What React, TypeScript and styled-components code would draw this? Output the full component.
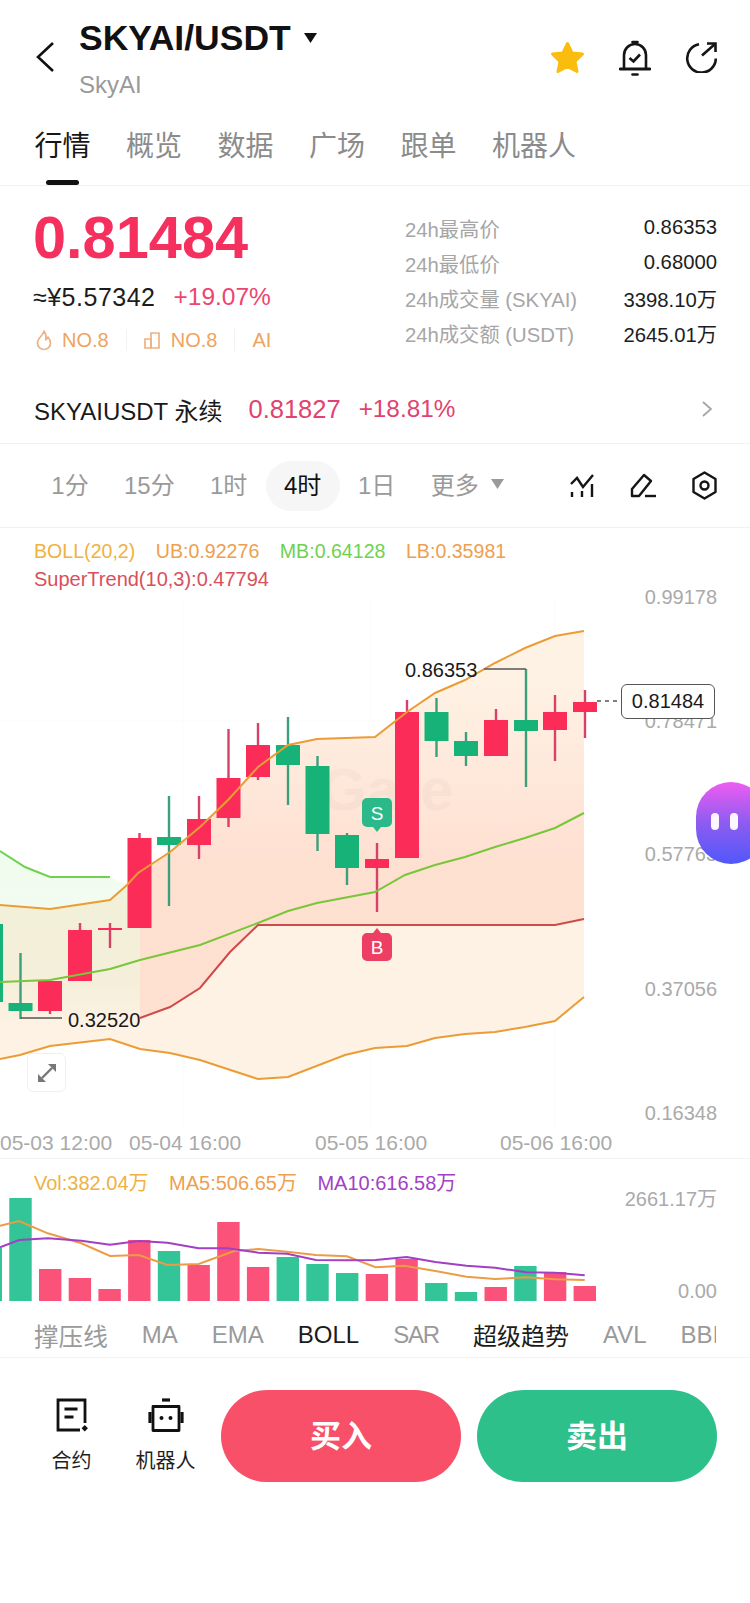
import React from "react";
import styled, { createGlobalStyle } from "styled-components";

const FONT = `"Liberation Sans", "Noto Sans CJK SC", sans-serif`;

const Global = createGlobalStyle`
  html, body { margin: 0; padding: 0; background: #fff; }
  body { font-family: ${FONT}; overflow: hidden; }
  * { box-sizing: border-box; }
`;

const Page = styled.div`
  width: 750px;
  height: 1603px;
  background: #fff;
  overflow: hidden;
  position: relative;
  color: #1a1a1a;
`;

/* ---------- header ---------- */
const Header = styled.header`
  height: 114px;
  display: flex;
  align-items: center;
  padding: 0 33px 0 36px;
`;
const TitleBlock = styled.div`
  align-self: flex-start;
  margin-left: 25px;
  padding-top: 18px;
  display: flex;
  flex-direction: column;
  gap: 12px;
`;
const TitleRow = styled.div`
  display: flex;
  align-items: center;
  gap: 13px;
`;
const Title = styled.h1`
  margin: 0;
  font-size: 35.5px;
  line-height: 40px;
  font-weight: 700;
  color: #111;
`;
const Subtitle = styled.div`
  font-size: 24px;
  line-height: 30px;
  color: #9a9a9a;
`;
const HeaderIcons = styled.div`
  margin-left: auto;
  display: flex;
  align-items: center;
  gap: 34px;
`;

/* ---------- tabs ---------- */
const TabBar = styled.nav`
  height: 72px;
  display: flex;
  gap: 35.5px;
  padding: 13px 0 0 34.5px;
  border-bottom: 1px solid #f1f1f1;
`;
const Tab = styled.div<{ $active?: boolean }>`
  display: flex;
  flex-direction: column;
  align-items: center;
  gap: 13px;
  font-size: 28px;
  line-height: 40px;
  color: ${(p) => (p.$active ? "#161616" : "#8b8b8b")};
  &::after {
    content: "";
    width: 33px;
    height: 5px;
    border-radius: 3px;
    background: ${(p) => (p.$active ? "#111" : "transparent")};
  }
`;

/* ---------- summary ---------- */
const Summary = styled.section`
  height: 191px;
  display: flex;
  padding: 22px 33px 0 33px;
`;
const PriceCol = styled.div`
  flex: 1;
  display: flex;
  flex-direction: column;
`;
const BigPrice = styled.div`
  font-size: 59.5px;
  line-height: 60px;
  font-weight: 700;
  color: #f5305f;
`;
const ApproxRow = styled.div`
  margin-top: 14px;
  display: flex;
  gap: 18px;
  font-size: 25px;
  line-height: 30px;
  color: #1c1c1c;
`;
const Approx = styled.span`
  letter-spacing: 0.5px;
`;
const Change = styled.span`
  color: #ee4570;
  font-size: 24.5px;
`;
const TagRow = styled.div`
  margin: 14px 0 0 3px;
  display: flex;
  align-items: center;
  height: 28px;
  font-size: 20px;
  color: #eea45f;
`;
const Tag = styled.span`
  display: flex;
  align-items: center;
  gap: 10px;
`;
const TagDivider = styled.span`
  width: 1px;
  height: 22px;
  margin: 0 17px;
  background: #f2f2f2;
`;
const StatCol = styled.div`
  width: 312px;
  padding-top: 2px;
  display: flex;
  flex-direction: column;
`;
const StatRow = styled.div`
  height: 35px;
  display: flex;
  align-items: center;
  justify-content: space-between;
  font-size: 20.3px;
  color: #1d1d1d;
`;
const StatLabel = styled.span`
  color: #a6a6a6;
`;

/* ---------- perpetual row ---------- */
const PerpRow = styled.div`
  height: 67px;
  display: flex;
  align-items: center;
  padding: 0 38px 2px 34px;
  border-bottom: 1px solid #f2f2f2;
`;
const PerpName = styled.span`
  color: #1a1a1a;
  margin-right: 26px;
  font-size: 24px;
`;
const PerpValue = styled.span<{ $size: number }>`
  color: #e2426f;
  margin-right: 18px;
  font-size: ${(p) => p.$size}px;
`;
const PerpArrow = styled.span`
  margin-left: auto;
  display: flex;
`;

/* ---------- timeframe ---------- */
const FrameBar = styled.div`
  height: 84px;
  display: flex;
  align-items: center;
  gap: 1px;
  padding: 0 33px 0 34px;
  border-bottom: 1px solid #f2f2f2;
`;
const Frame = styled.div<{ $active?: boolean }>`
  height: 50px;
  min-width: ${(p) => (p.$active ? 74 : 72)}px;
  padding: 0 17px 4px;
  border-radius: 25px;
  display: flex;
  align-items: center;
  justify-content: center;
  gap: 12px;
  font-size: 24px;
  color: ${(p) => (p.$active ? "#111" : "#9a9a9a")};
  background: ${(p) => (p.$active ? "#f6f6f6" : "transparent")};
`;
const FrameIcons = styled.div`
  margin-left: auto;
  display: flex;
  align-items: center;
  gap: 36px;
`;

/* ---------- legends ---------- */
const Legend = styled.div`
  height: 62px;
  padding: 9px 0 0 34px;
  font-size: 20px;
  line-height: 28px;
`;
const LegendRow = styled.div<{ $size?: number }>`
  display: flex;
  gap: 20.5px;
  white-space: nowrap;
  font-size: ${(p) => p.$size ?? 20}px;
`;
const LegendItem = styled.span<{ $color: string }>`
  color: ${(p) => p.$color};
`;

/* ---------- chart ---------- */
const ChartArea = styled.div`
  position: relative;
  height: 569px;
  border-bottom: 1px solid #f3f3f3;
`;
const ChartSvg = styled.svg`
  display: block;
  overflow: visible;
  font-family: ${FONT};
`;
const PriceTag = styled.div`
  position: absolute;
  left: 621px;
  top: 94px;
  width: 94px;
  height: 35px;
  border: 1.5px solid #555;
  border-radius: 6px;
  background: #fff;
  display: flex;
  align-items: center;
  justify-content: center;
  font-size: 20px;
  color: #1a1a1a;
`;
const Bubble = styled.div`
  position: absolute;
  left: 696px;
  top: 192px;
  width: 70px;
  height: 82px;
  border-radius: 41px;
  background: linear-gradient(180deg, #ef5cf2 0%, #8d5cf0 50%, #5058fb 100%);
  display: flex;
  gap: 11px;
  padding: 31px 0 0 15px;
`;
const BubbleEye = styled.span`
  width: 8px;
  height: 17px;
  border-radius: 4px;
  background: #fbf6ff;
`;
const ExpandButton = styled.div`
  position: absolute;
  left: 27px;
  top: 463px;
  width: 39px;
  height: 39px;
  border: 1px solid #efefef;
  border-radius: 6px;
  background: #fff;
  display: flex;
  align-items: center;
  justify-content: center;
`;

/* ---------- indicators ---------- */
const VolumeLegend = styled(Legend)`
  height: 36px;
  padding-top: 10px;
`;
const IndicatorBar = styled.div`
  height: 51px;
  margin: 0 34px;
  padding-top: 6px;
  display: flex;
  align-items: center;
  gap: 34px;
  overflow: hidden;
  white-space: nowrap;
  font-size: 24px;
`;
const Indicator = styled.span<{ $on?: boolean; $tight?: boolean }>`
  flex: none;
  letter-spacing: ${(p) => (p.$tight ? "-1.2px" : "0")};
  color: ${(p) => (p.$on ? "#1b1b1b" : "#9a9a9a")};
  &:first-child {
    font-size: 24.6px;
  }
`;
const IndicatorRule = styled.div`
  height: 1px;
  background: #f3f3f3;
`;

/* ---------- footer ---------- */
const Footer = styled.footer`
  display: flex;
  padding: 32px 33px 0 24.5px;
`;
const Actions = styled.div`
  display: flex;
  flex: none;
  width: 196.5px;
`;
const Action = styled.div`
  width: 94px;
  display: flex;
  flex-direction: column;
  align-items: center;
  padding-top: 8px;
  gap: 15px;
  font-size: 20px;
  line-height: 28px;
  color: #1f1f1f;
`;
const TradeButton = styled.div<{ $color: string }>`
  width: 240px;
  height: 92px;
  border-radius: 46px;
  background: ${(p) => p.$color};
  display: flex;
  align-items: center;
  justify-content: center;
  padding-bottom: 6px;
  color: #fff;
  font-size: 31px;
  font-weight: 700;
  & + & {
    margin-left: 16px;
  }
`;

/* ---------- data ---------- */
type C = [number, number, number, number, number, boolean];
const RED = "#fb2c57";
const GREEN = "#17b277";
const candles: C[] = [
  [-9, 924, 1002, 924, 1002, false],
  [20.5, 1003, 1011, 953, 1019, false],
  [50, 981, 1011, 981, 1014, true],
  [80, 930, 981, 923, 981, true],
  [110, 928, 930, 923, 948, true],
  [139.5, 838, 928, 833, 928, true],
  [169, 837, 845, 796, 906, false],
  [199, 819, 845, 796, 859, true],
  [228.5, 778, 818, 729, 827, true],
  [258, 745, 777, 723, 780, true],
  [288, 745, 765, 717, 805, false],
  [317.5, 766, 834, 756, 851, false],
  [347, 835, 868, 833, 885, false],
  [377, 859, 868, 843, 912, true],
  [407, 712, 858, 700, 858, true],
  [436.5, 712, 741, 698, 757, false],
  [466, 741, 756, 732, 766, false],
  [496, 720, 756, 709, 756, true],
  [526, 720, 731, 669, 787, false],
  [555, 712, 730, 695, 761, true],
  [585, 702, 712, 690, 738, true],
];
const upper = "0,905 50,909 110,900 127,885 138,873 170,852 200,827 228,800 258,767 288,745 317,739 375,737 407,712 435,693 465,680 495,663 525,648 555,636 584,631";
const lower = "0,1059 20,1055 50,1046 110,1039 140,1049 170,1053 200,1060 258,1079 288,1077 345,1055 375,1048 407,1046 435,1038 465,1034 495,1032 525,1027 555,1021 584,997";
const mid = "0,982 50,980 110,969 140,960 200,945 258,923 288,911 317,903 375,892 405,875 435,865 465,857 495,847 525,838 555,828 584,813";
const trendRed = "140,1018 170,1007 200,988 230,952 258,925 555,925 584,919";
const trendGreen = "0,851 25,867 50,877 110,877";
const bandFill = `${upper} ${lower.split(" ").reverse().join(" ")}`;
const redFill = `140,873 170,852 200,827 228,800 258,767 288,745 317,739 375,737 407,712 435,693 465,680 495,663 525,648 555,636 584,631 ${trendRed.split(" ").reverse().join(" ")}`;
const greenFill = `${trendGreen} 127,885 140,873 140,1010 0,1030`;

const bars: [number, boolean][] = [
  [1248, false], [1198, false], [1269, true], [1278, true], [1289, true], [1240, true], [1251, false],
  [1265, true], [1222, true], [1267, true], [1257, false], [1264, false], [1273, false], [1274, true],
  [1259, true], [1283, false], [1292, false], [1287, true], [1266, false], [1272, true], [1286, true],
];
const toVol = (pts: number[][]) =>
  pts.map(([x, y]) => `${(x / 2.09).toFixed(1)},${(1160 + y / 3).toFixed(1)}`).join(" ");
const ma5 = toVol([[0,197],[40,183],[100,220],[170,250],[230,288],[290,285],[350,315],[415,312],[490,273],[540,267],[600,275],[660,285],[725,289],[785,322],[845,317],[910,333],[975,350],[1035,357],[1100,352],[1160,358],[1222,360]]);
const ma10 = toVol([[0,262],[40,240],[100,235],[170,242],[230,254],[290,243],[350,248],[415,265],[475,265],[540,278],[600,281],[660,300],[725,301],[785,300],[850,291],[910,306],[975,317],[1035,323],[1100,337],[1160,338],[1222,346]]);

/* ---------- small drawings ---------- */
const Back = () => (
  <svg width="18" height="32" viewBox="0 0 18 32" fill="none">
    <polyline points="17,2 2,16 17,30" stroke="#111" strokeWidth="2.6" />
  </svg>
);
const Caret = () => (
  <svg width="13" height="10" viewBox="0 0 13 10"><polygon points="0,0 13,0 6.5,10" fill="#111" /></svg>
);
const Star = () => (
  <svg width="35" height="33" viewBox="0 0 35 33">
    <polygon points="17.5,2.5 22,12 32.5,13 25,20.5 27,30.5 17.5,25.5 8,30.5 10,20.5 2.5,13 13,12" fill="#fbbd0d" stroke="#fbbd0d" strokeWidth="3" strokeLinejoin="round" />
  </svg>
);
const Bell = () => (
  <svg width="32" height="37" viewBox="0 0 32 37" fill="none" stroke="#151515">
    <path d="M5 29V16a11 11 0 0 1 22 0v13" strokeWidth="2.6" />
    <path d="M1 30h30" strokeWidth="2.8" strokeLinecap="round" />
    <path d="M13.5 3h5" strokeWidth="2.6" strokeLinecap="round" />
    <path d="M13.5 35.5h5" strokeWidth="2.6" strokeLinecap="round" />
    <path d="M10.5 19l4 3.5 6.5-7" strokeWidth="2.6" />
  </svg>
);
const Share = () => (
  <svg width="32" height="31" viewBox="0 0 32 31" fill="none" stroke="#151515" strokeWidth="2.6">
    <path d="M14 2.200A14.300 14.300 0 1 0 30.800 16.500" />
    <path d="M17 13.500L30 2" />
    <path d="M22 1.500H30.500V10" />
  </svg>
);
const RightChevron = () => (
  <svg width="10" height="16" viewBox="0 0 10 16" fill="none"><polyline points="1,1 9,8 1,15" stroke="#a5a5a5" strokeWidth="1.8" /></svg>
);
const SmallCaret = () => (
  <svg width="13" height="10" viewBox="0 0 13 10"><polygon points="0,0 13,0 6.5,10" fill="#9a9a9a" /></svg>
);
const Flame = () => (
  <svg width="16" height="21" viewBox="0 0 16 21" fill="none">
    <path d="M8 1c0 4-6.500 6.500-6.500 12a6.500 6.500 0 0 0 13 0c0-2.500-1.200-4.500-2.500-6-.5 1.500-1.200 2.300-2.300 2.800C10.300 7 9.800 3.500 8 1z" stroke="#eeb283" strokeWidth="1.7" strokeLinejoin="round" />
  </svg>
);
const Rank = () => (
  <svg width="17" height="18" viewBox="0 0 17 18" fill="none" stroke="#eeb283" strokeWidth="1.7">
    <path d="M1 17V8h6v9z" />
    <path d="M7 17V2h8v15z" />
  </svg>
);
const IndicatorIcon = () => (
  <svg width="24" height="23" viewBox="0 0 24 23" fill="none" stroke="#151515" strokeWidth="2.4">
    <polyline points="1,10 7,4 13,13 23,1" />
    <path d="M2 18v5M12 17v6M22 10v13" />
  </svg>
);
const Pencil = () => (
  <svg width="26" height="25" viewBox="0 0 26 25" fill="none" stroke="#151515" strokeWidth="2.4" strokeLinejoin="round">
    <path d="M2 23V16L14 2l7 6L9 23z" />
    <path d="M15 23h11" />
  </svg>
);
const Hex = () => (
  <svg width="25" height="29" viewBox="0 0 25 29" fill="none" stroke="#151515" strokeWidth="2.4" strokeLinejoin="round">
    <path d="M12.500 1.500L23.500 8v13l-11 6.500L1.500 21V8z" />
    <circle cx="12.500" cy="14.500" r="4" />
  </svg>
);
const ExpandIcon = () => (
  <svg width="20" height="20" viewBox="0 0 20 20" fill="#777">
    <polygon points="11,1 19,1 19,9" />
    <polygon points="1,11 1,19 9,19" />
    <path d="M15 5L5 15" stroke="#777" strokeWidth="2.4" />
  </svg>
);
const ContractIcon = () => (
  <svg width="34" height="34" viewBox="0 0 34 34" fill="none" stroke="#111" strokeWidth="2.8">
    <path d="M30 25V2H3v30h22" />
    <path d="M9.500 11h13M9.500 19h9" />
    <rect x="27.500" y="28" width="4.500" height="4.500" fill="#111" stroke="none" transform="rotate(45 29.750 30.250)" />
  </svg>
);
const RobotIcon = () => (
  <svg width="36" height="34" viewBox="0 0 36 34" fill="none" stroke="#111" strokeWidth="2.8">
    <path d="M14 2h8" strokeWidth="3.200" />
    <path d="M5 8.500h26v24h-26z" strokeLinejoin="round" />
    <path d="M2 14v11M34 14v11" strokeWidth="3.200" />
    <circle cx="13.500" cy="20" r="2" fill="#111" stroke="none" />
    <circle cx="22.500" cy="20" r="2" fill="#111" stroke="none" />
  </svg>
);

const Axis = ({ y, children }: { y: number; children: React.ReactNode }) => (
  <text x={717} y={y + 7} textAnchor="end" fontSize="20" fill="#aaaaaa">{children}</text>
);
const TimeLabel = ({ x, children }: { x: number; children: React.ReactNode }) => (
  <text x={x} y={1150} fontSize="21" fill="#aaaaaa">{children}</text>
);

const Chart = () => (
  <ChartSvg width="750" height="568" viewBox="0 590 750 568">
    <defs>
      <linearGradient id="redTint" gradientUnits="userSpaceOnUse" x1="0" y1="680" x2="0" y2="860">
        <stop offset="0" stopColor="#ff8f78" stopOpacity="0" />
        <stop offset="1" stopColor="#ff8f78" stopOpacity="0.18" />
      </linearGradient>
      <linearGradient id="greenTint" gradientUnits="userSpaceOnUse" x1="0" y1="850" x2="0" y2="1030">
        <stop offset="0" stopColor="#7fe86f" stopOpacity="0.12" />
        <stop offset="0.75" stopColor="#9ecf6f" stopOpacity="0.09" />
        <stop offset="1" stopColor="#9ecf6f" stopOpacity="0" />
      </linearGradient>
    </defs>
    {[183, 370, 555].map((x) => <line key={x} x1={x} x2={x} y1={600} y2={1130} stroke="#fbfbfb" strokeWidth="1" />)}
    <line x1="0" x2="590" y1="721" y2="721" stroke="#fbfbfb" strokeWidth="1" />

    <polygon points={bandFill} fill="#fef2e5" />
    <polygon points={greenFill} fill="url(#greenTint)" />
    <polygon points={redFill} fill="url(#redTint)" />

    <text x="320" y="810" fontSize="60" fontWeight="700" fill="#000" opacity="0.018">Gate</text>

    <polyline points={trendGreen} fill="none" stroke="#6ed24f" strokeWidth="2" />
    <polyline points={trendRed} fill="none" stroke="#cf4a4a" strokeWidth="2" />

    {candles.map(([x, top, bottom, hi, lo, up]) => (
      <g key={x}>
        <line x1={x} x2={x} y1={hi} y2={lo} stroke={up ? "#d6416a" : "#3c9f7c"} strokeWidth="2.4" />
        <rect x={x - 12} y={top} width="24" height={bottom - top} fill={up ? RED : GREEN} />
      </g>
    ))}

    <polyline points={upper} fill="none" stroke="#ec9c35" strokeWidth="2" />
    <polyline points={lower} fill="none" stroke="#ec9c35" strokeWidth="2" />
    <polyline points={mid} fill="none" stroke="#79c63a" strokeWidth="2" />

    <polyline points="484,669 526,669" fill="none" stroke="#555" strokeWidth="1.5" />
    <text x="405" y="677" fontSize="20" fill="#1a1a1a">0.86353</text>
    <polyline points="20.500,1018 62,1018" fill="none" stroke="#555" strokeWidth="1.5" />
    <text x="68" y="1027" fontSize="20" fill="#1a1a1a">0.32520</text>

    <line x1="597" x2="621" y1="701" y2="701" stroke="#555" strokeWidth="1.5" strokeDasharray="4 4" />

    <path d="M367 798h20a5 5 0 0 1 5 5v19a5 5 0 0 1-5 5h-6l-4 5-4-5h-6a5 5 0 0 1-5-5v-19a5 5 0 0 1 5-5z" fill="#2cb98a" />
    <text x="377" y="820" textAnchor="middle" fontSize="19" fill="#fff">S</text>
    <path d="M367 933h6l4-5 4 5h6a5 5 0 0 1 5 5v18a5 5 0 0 1-5 5h-20a5 5 0 0 1-5-5v-18a5 5 0 0 1 5-5z" fill="#ec3f63" />
    <text x="377" y="954" textAnchor="middle" fontSize="19" fill="#fff">B</text>

    <Axis y={597}>0.99178</Axis>
    <Axis y={721}>0.78471</Axis>
    <Axis y={854}>0.57763</Axis>
    <Axis y={989}>0.37056</Axis>
    <Axis y={1113}>0.16348</Axis>

    <TimeLabel x={0}>05-03 12:00</TimeLabel>
    <TimeLabel x={129}>05-04 16:00</TimeLabel>
    <TimeLabel x={315}>05-05 16:00</TimeLabel>
    <TimeLabel x={500}>05-06 16:00</TimeLabel>
  </ChartSvg>
);

const Volume = () => (
  <ChartSvg width="750" height="111" viewBox="0 1195 750 111">
    {bars.map(([top, up], i) => (
      <rect key={i} x={-9.200 + 29.700 * i - 11.200} y={top} width="22.400" height={1301 - top} fill={up ? "#fb5279" : "#33c497"} />
    ))}
    <polyline points={ma5} fill="none" stroke="#ec9c45" strokeWidth="2" />
    <polyline points={ma10} fill="none" stroke="#a23fc4" strokeWidth="2" />
    <Axis y={1199}>2661.17万</Axis>
    <Axis y={1291}>0.00</Axis>
  </ChartSvg>
);

export default function App() {
  return (
    <Page>
      <Global />
      <Header>
        <Back />
        <TitleBlock>
          <TitleRow>
            <Title>SKYAI/USDT</Title>
            <Caret />
          </TitleRow>
          <Subtitle>SkyAI</Subtitle>
        </TitleBlock>
        <HeaderIcons>
          <Star />
          <Bell />
          <Share />
        </HeaderIcons>
      </Header>

      <TabBar>
        <Tab $active>行情</Tab>
        <Tab>概览</Tab>
        <Tab>数据</Tab>
        <Tab>广场</Tab>
        <Tab>跟单</Tab>
        <Tab>机器人</Tab>
      </TabBar>

      <Summary>
        <PriceCol>
          <BigPrice>0.81484</BigPrice>
          <ApproxRow>
            <Approx>≈¥5.57342</Approx>
            <Change>+19.07%</Change>
          </ApproxRow>
          <TagRow>
            <Tag><Flame />NO.8</Tag>
            <TagDivider />
            <Tag><Rank />NO.8</Tag>
            <TagDivider />
            <Tag>AI</Tag>
          </TagRow>
        </PriceCol>
        <StatCol>
          <StatRow><StatLabel>24h最高价</StatLabel><span>0.86353</span></StatRow>
          <StatRow><StatLabel>24h最低价</StatLabel><span>0.68000</span></StatRow>
          <StatRow><StatLabel>24h成交量 (SKYAI)</StatLabel><span>3398.10万</span></StatRow>
          <StatRow><StatLabel>24h成交额 (USDT)</StatLabel><span>2645.01万</span></StatRow>
        </StatCol>
      </Summary>

      <PerpRow>
        <PerpName>SKYAIUSDT 永续</PerpName>
        <PerpValue $size={25.5}>0.81827</PerpValue>
        <PerpValue $size={24.3}>+18.81%</PerpValue>
        <PerpArrow><RightChevron /></PerpArrow>
      </PerpRow>

      <FrameBar>
        <Frame>1分</Frame>
        <Frame>15分</Frame>
        <Frame>1时</Frame>
        <Frame $active>4时</Frame>
        <Frame>1日</Frame>
        <Frame>更多<SmallCaret /></Frame>
        <FrameIcons>
          <IndicatorIcon />
          <Pencil />
          <Hex />
        </FrameIcons>
      </FrameBar>

      <Legend>
        <LegendRow $size={19.6}>
          <LegendItem $color="#efb23f">BOLL(20,2)</LegendItem>
          <LegendItem $color="#eda050">UB:0.92276</LegendItem>
          <LegendItem $color="#6fd24f">MB:0.64128</LegendItem>
          <LegendItem $color="#eda050">LB:0.35981</LegendItem>
        </LegendRow>
        <LegendRow>
          <LegendItem $color="#d9505a">SuperTrend(10,3):0.47794</LegendItem>
        </LegendRow>
      </Legend>

      <ChartArea>
        <Chart />
        <PriceTag>0.81484</PriceTag>
        <Bubble><BubbleEye /><BubbleEye /></Bubble>
        <ExpandButton><ExpandIcon /></ExpandButton>
      </ChartArea>

      <VolumeLegend>
        <LegendRow>
          <LegendItem $color="#efb23f">Vol:382.04万</LegendItem>
          <LegendItem $color="#eda050">MA5:506.65万</LegendItem>
          <LegendItem $color="#a33fc6">MA10:616.58万</LegendItem>
        </LegendRow>
      </VolumeLegend>
      <Volume />

      <IndicatorBar>
        <Indicator>撑压线</Indicator>
        <Indicator>MA</Indicator>
        <Indicator>EMA</Indicator>
        <Indicator $on>BOLL</Indicator>
        <Indicator $tight>SAR</Indicator>
        <Indicator $on>超级趋势</Indicator>
        <Indicator>AVL</Indicator>
        <Indicator>BBI</Indicator>
      </IndicatorBar>
      <IndicatorRule />

      <Footer>
        <Actions>
          <Action><ContractIcon />合约</Action>
          <Action><RobotIcon />机器人</Action>
        </Actions>
        <TradeButton $color="#f85068">买入</TradeButton>
        <TradeButton $color="#2dc08a">卖出</TradeButton>
      </Footer>
    </Page>
  );
}
